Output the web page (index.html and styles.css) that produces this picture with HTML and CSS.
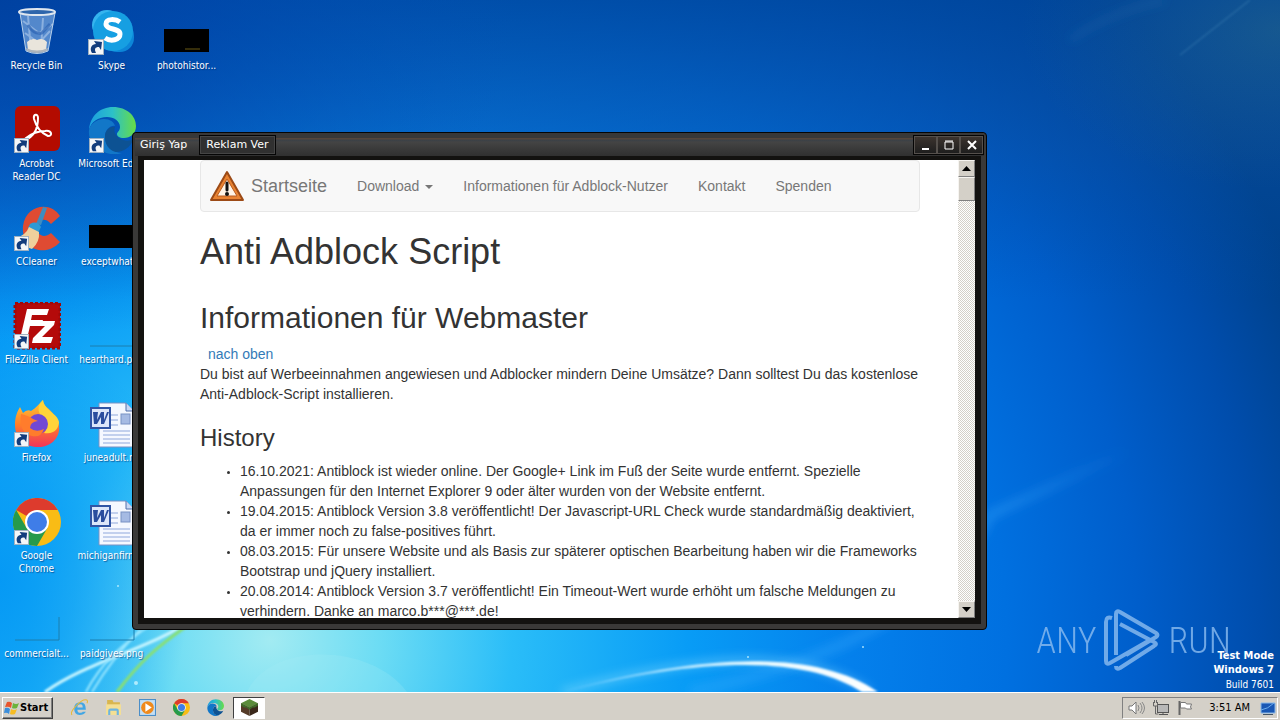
FILE: index.html
```html
<!DOCTYPE html>
<html lang="de">
<head>
<meta charset="utf-8">
<title>Desktop</title>
<link rel="stylesheet" href="styles.css">
</head>
<body>
<svg class="defs" aria-hidden="true">
  <symbol id="shortcut" viewBox="0 0 16 16">
    <rect x=".5" y=".5" width="15" height="15" fill="#f4f6f8" stroke="#9fb0c0"/>
    <path d="M4 14C1 9 4 5 8 5L6 2l8 1-1 8-2-3c-4 0-5 2-3 6z" fill="#123c7c"/>
  </symbol>
  <symbol id="skype" viewBox="0 0 48 48">
    <rect x="4" y="2" width="30" height="30" rx="15" fill="#35b4ee"/>
    <rect x="15" y="14" width="31" height="30" rx="14" fill="#0c86d8"/>
    <circle cx="25" cy="23" r="20" fill="#169fe2"/>
    <path d="M32 14c-4-3-14-4-14 2s14 4 14 10-9 8-15 4" fill="none" stroke="#fff" stroke-width="5"/>
  </symbol>
  <symbol id="edge" viewBox="0 0 48 48">
    <path d="M1 24C2 10 12 1 25 1c14 0 23 9 23 19 0 8-6 12-12 12-5 0-7-2-7-4s3-3 3-7c0-6-6-10-13-10C10 11 3 16 1 24z" fill="url(#edgeTop)"/>
    <path d="M1 24c2-7 8-11 15-11 6 0 10 3 11 7-4-1-10 3-10 11 0 9 8 16 17 16-5 2-13 2-20-2C5 41 0 33 1 24z" fill="#1277c8"/>
    <path d="M17 29c1-6 6-9 10-8-1 2-1 5 1 8 4 6 12 7 18 4-4 8-10 13-18 13-7-1-12-9-11-17z" fill="#0d5293"/>
  </symbol>
  <symbol id="chrome" viewBox="0 0 48 48">
    <circle cx="24" cy="24" r="24" fill="#f9bc15"/>
    <path d="M24 24 3.2 12A24 24 0 0 1 44.8 12H24z" fill="#dd3b2d"/>
    <path d="M3.2 12A24 24 0 0 0 24 48L34.4 30 24 24 13.6 30z" fill="#269a4b"/>
    <circle cx="24" cy="24" r="12" fill="#fff"/><circle cx="24" cy="24" r="10" fill="#3f7de8"/>
  </symbol>
  <symbol id="word" viewBox="0 0 48 48">
    <path d="M11 3h27l8 8v36H11z" fill="#f5f8ff" stroke="#7891c4"/>
    <path d="M38 3v8h8" fill="#c8d8f4" stroke="#506ea9"/>
    <path d="M22 15h8M22 20h8M22 25h8M15 31h27M15 35h27M15 39h27M15 43h27" stroke="#8fa8dc"/>
    <rect x="33" y="14" width="9" height="10" fill="#a5bae3" stroke="#7891c4"/>
    <rect x="3" y="8" width="19" height="20" fill="#dce6fa" stroke="#3155a5" stroke-width="2"/>
    <path d="M5 12h5l-1 8 4-8h3v8l3-8h2l-5 12h-3v-7l-4 7H6z" fill="#2a4d9e"/>
  </symbol>
  <linearGradient id="edgeTop"><stop offset="0" stop-color="#1b9de0"/><stop offset=".5" stop-color="#2cc0c8"/><stop offset="1" stop-color="#68dd45"/></linearGradient>
  <linearGradient id="fox" x2="0" y2="1"><stop stop-color="#ffcb36"/><stop offset=".5" stop-color="#ff8129"/><stop offset="1" stop-color="#f0345a"/></linearGradient>
</svg>

<main class="desktop">
  <svg class="wallpaper" viewBox="0 0 1280 692" preserveAspectRatio="none" aria-hidden="true">
    <defs>
      <radialGradient id="sky" gradientUnits="userSpaceOnUse" cx="0" cy="0" r="1100" gradientTransform="translate(270 640) scale(1 .92)">
        <stop offset="0" stop-color="#a2ebf2"/><stop offset=".1" stop-color="#6cdcf4"/><stop offset=".22" stop-color="#2abdf8"/><stop offset=".38" stop-color="#089cf6"/><stop offset=".53" stop-color="#0480ec"/><stop offset=".67" stop-color="#0070e0"/><stop offset=".79" stop-color="#005ecb"/><stop offset=".9" stop-color="#004dac"/><stop offset="1" stop-color="#004088"/>
      </radialGradient>
      <radialGradient id="corner" gradientUnits="userSpaceOnUse" cx="0" cy="0" r="1" gradientTransform="scale(520 340)">
        <stop offset="0" stop-color="#0040a0" stop-opacity=".9"/><stop offset=".4" stop-color="#0044aa" stop-opacity=".6"/><stop offset="1" stop-color="#0050b8" stop-opacity="0"/>
      </radialGradient>
      <radialGradient id="left"><stop offset="0" stop-color="#0094f4" stop-opacity=".85"/><stop offset=".4" stop-color="#0094f4" stop-opacity=".6"/><stop offset="1" stop-color="#0094f4" stop-opacity="0"/></radialGradient>
      <linearGradient id="top" x2="0" y2="1"><stop offset="0" stop-color="#00469c" stop-opacity=".8"/><stop offset=".5" stop-color="#084fa4" stop-opacity=".45"/><stop offset="1" stop-color="#0050b0" stop-opacity="0"/></linearGradient>
      <radialGradient id="haze"><stop offset="0" stop-color="#68a070" stop-opacity=".2"/><stop offset="1" stop-color="#407a90" stop-opacity="0"/></radialGradient>
      <linearGradient id="arc"><stop offset="0" stop-color="#5cc4ff"/><stop offset=".6" stop-color="#e8faff"/><stop offset="1" stop-color="#fff"/></linearGradient>
      <linearGradient id="ray" gradientUnits="userSpaceOnUse" x1="690" y1="692" x2="1130" y2="450"><stop offset="0" stop-color="#45b0ff" stop-opacity=".3"/><stop offset=".7" stop-color="#45b0ff" stop-opacity=".3"/><stop offset="1" stop-color="#45b0ff" stop-opacity="0"/></linearGradient>
      <filter id="soft"><feGaussianBlur stdDeviation="1"/></filter>
      <filter id="glow" x="-20%" y="-50%" width="140%" height="200%"><feGaussianBlur stdDeviation="5"/></filter>
    </defs>
    <rect width="1280" height="692" fill="url(#sky)"/>
    <ellipse cx="0" cy="580" rx="190" ry="260" fill="url(#left)"/>
    <rect width="1280" height="300" fill="url(#top)"/>
    <rect width="540" height="340" fill="url(#corner)"/>
    <ellipse cx="1280" cy="30" rx="260" ry="160" fill="url(#haze)"/>
    <path d="M1180 55 1250 0" stroke="#5c9cc8" stroke-opacity=".5" filter="url(#soft)"/>
    <path d="M1070 40Q1110 12 1165 0" fill="none" stroke="#3978b8" stroke-opacity=".2" stroke-width="6" filter="url(#glow)"/>
    <path d="M690 692Q800 670 880 625T990 515L1130 450" fill="none" stroke="url(#ray)" stroke-width="10" filter="url(#glow)"/>
    <path d="M247 692C270 642 370 642 407 692z" fill="#a8ecf8" fill-opacity=".22"/>
    <path d="M562 692C690 656 800 644 870 692" fill="none" stroke="#9ae4ff" stroke-width="7" stroke-opacity=".4" filter="url(#glow)"/>
    <path d="M562 692C690 660 800 652 862 692H878C812 646 690 656 562 692z" fill="url(#arc)" filter="url(#soft)"/>
    <path d="M45 692C90 660 150 650 200 615" fill="none" stroke="#c9f6ff" stroke-width="3" filter="url(#soft)"/>
    <path d="M86 692C100 665 120 645 155 622M92 692C110 662 125 645 140 630" fill="none" stroke="#9be8ff" stroke-width="2" filter="url(#soft)"/>
    <path d="M117 692C138 664 155 647 200 617" fill="none" stroke="#8ae070" stroke-width="3" filter="url(#soft)"/>
    <g fill="#c8f4ff" opacity=".8"><circle cx="748" cy="657" r="1"/><circle cx="863" cy="647" r="1"/><circle cx="118" cy="586" r="1"/><circle cx="136" cy="683" r="2"/></g>
  </svg>

  <div class="icons">
    <div class="icon"><svg viewBox="0 0 48 48"><path d="M7 5 13 43q11 5 22 0L42 5z" fill="#8bb5e6" fill-opacity=".6" stroke="#b9d1ea"/><path d="m15 8 3 34m12-32-2 30M10 13l16 12 14-9M12 25l14 10 11-12" fill="none" stroke="#e0eefc" stroke-opacity=".4" stroke-width="2"/><path d="M15 17q6 10 14 8l8-9" fill="none" stroke="#2c64b4" stroke-opacity=".7" stroke-width="3"/><path d="M14 34q5-5 10-2 6-3 10 2l-1 8q-9 4-18 0z" fill="#e9e5dc"/><path d="M13 40q11 5 22 0l-1 3q-10 4-20 0z" fill="#adb4bb"/><ellipse cx="24" cy="4" rx="18" ry="3" fill="#2e66ac" stroke="#dfe7ef" stroke-width="2"/></svg><span>Recycle Bin</span></div>
    <div class="icon"><svg viewBox="0 0 48 48"><rect x="2" y="0" width="45" height="45" rx="6" fill="#b30b00"/><path d="M12 34c8-3 13-10 13-22 0-5-5-4-4 1 2 7 7 14 14 17 5 0 4-6-3-5-8 0-14 3-19 7-4 4-4 5-1 2z" fill="none" stroke="#fff" stroke-width="2"/><use href="#shortcut" x="1" y="32" width="15" height="15"/></svg><span>Acrobat<br>Reader DC</span></div>
    <div class="icon"><svg viewBox="0 0 48 48"><path d="M47 12C38-3 13 0 10 22c-2 24 23 32 37 16l-9-9c-7 6-15 2-14-6s9-10 14-3z" fill="#df4b32"/><path d="m30 3 4 1-6 17-5-1z" fill="#3e8dc0"/><path d="M17 20q7-4 11 3l-3 6-10-5z" fill="#2d9bd6"/><path d="M3 34q10-3 13-11l10 5q1 10-7 17Q8 42 3 34z" fill="#efd09c"/><use href="#shortcut" x="1" y="32" width="15" height="15"/></svg><span>CCleaner</span></div>
    <div class="icon"><svg viewBox="0 0 48 48"><rect x="2" y="1" width="45" height="45" fill="#b40a0a" stroke="#a00808" stroke-width="3" stroke-dasharray="3 2"/><path d="M14 7h22l-2 6H19l-1 5h12l-2 6H17l-3 13H7zM25 19h17l-1 4-12 12h11l-2 6H19l1-5 12-12h-8z" fill="#fff"/><use href="#shortcut" x="1" y="32" width="15" height="15"/></svg><span>FileZilla Client</span></div>
    <div class="icon"><svg viewBox="0 0 48 48"><path d="M2 25C2 17 4 12 7 7l3 6q4-4 8-2C23 8 27 3 30 0c0 7 6 7 12 16 10 14 1 31-17 31C11 47 2 38 2 25z" fill="url(#fox)"/><path d="M30 0c-7 7-5 14 1 18 5 5 3 12 0 15 10 2 15-5 15-11C45 14 31 10 30 0z" fill="#ffd43a"/><circle cx="25" cy="24" r="10" fill="#7148d4"/><path d="M8 14q8 2 12 5l5 2q-8 1-8 7 6 5 14 1-3 9-12 7C10 34 6 26 8 14z" fill="#ff7c2c"/><use href="#shortcut" x="1" y="32" width="15" height="15"/></svg><span>Firefox</span></div>
    <div class="icon"><svg viewBox="0 0 48 48"><use href="#chrome" width="48" height="48"/><use href="#shortcut" x="1" y="32" width="15" height="15"/></svg><span>Google<br>Chrome</span></div>
    <div class="icon"><svg viewBox="0 0 48 48"><path d="M2 44h44V21" fill="none" stroke="#1c7fae"/></svg><span>commercialt...</span></div>
    <div class="icon"><svg viewBox="0 0 48 48"><use href="#skype" width="48" height="48"/><use href="#shortcut" x="0" y="31" width="16" height="16"/></svg><span>Skype</span></div>
    <div class="icon"><svg viewBox="0 0 48 48"><use href="#edge" width="48" height="48"/><use href="#shortcut" x="1" y="32" width="15" height="15"/></svg><span>Microsoft Edge</span></div>
    <div class="icon"><svg viewBox="0 0 48 48"><path d="M1 21h46v23H1z"/></svg><span>exceptwhat...</span></div>
    <div class="icon"><svg viewBox="0 0 48 48"><path d="M2 44h44V21" fill="none" stroke="#1c7fae"/></svg><span>hearthard.png</span></div>
    <div class="icon"><svg viewBox="0 0 48 48"><use href="#word" width="48" height="48"/></svg><span>juneadult.rtf</span></div>
    <div class="icon"><svg viewBox="0 0 48 48"><use href="#word" width="48" height="48"/></svg><span>michiganfirm...</span></div>
    <div class="icon"><svg viewBox="0 0 48 48"><path d="M2 44h44V21" fill="none" stroke="#1c7fae"/></svg><span>paidgives.png</span></div>
    <div class="icon"><svg viewBox="0 0 48 48"><path d="M1 21h45v23H1z"/><path d="M22 41h15" stroke="#6b5a14"/></svg><span>photohistor...</span></div>
  </div>

  <div class="brand">
    <span>ANY</span>
    <svg viewBox="0 0 56 64" aria-hidden="true"><path d="M12 46V5q0-4 4-2l36 21q3 2 0 4L22 46M8 9Q2 7 2 13v39q0 4 4 2l40-23M16 15l34 18q4 2 0 4L16 59q-4 2-4-2M12 15v30" fill="none" stroke="currentColor" stroke-width="4" stroke-linejoin="round"/></svg>
    <span>RUN</span>
  </div>
  <div class="build"><b>Test Mode</b><b>Windows 7</b><span>Build 7601</span></div>

  <section class="window">
    <header class="titlebar">
      <button class="menu">Giriş Yap</button>
      <button class="menu framed">Reklam Ver</button>
      <div class="controls">
        <button aria-label="Minimize"><svg viewBox="0 0 12 12"><path d="M2 10h7" stroke="#fff" stroke-width="2"/></svg></button>
        <button aria-label="Maximize"><svg viewBox="0 0 12 12"><path d="M2 3h8v7H2zM2 2h8" fill="none" stroke="#fff"/></svg></button>
        <button aria-label="Close"><svg viewBox="0 0 12 12"><path d="m2 2 8 8m0-8-8 8" stroke="#fff" stroke-width="2"/></svg></button>
      </div>
    </header>
    <div class="view">
      <article class="page">
        <nav class="navbar">
          <a class="home" href="#"><svg viewBox="0 0 36 32" aria-hidden="true"><path d="M18 2 34 30H2z" fill="#e98332" stroke="#9c4a16" stroke-width="2" stroke-linejoin="round"/><path d="M18 9 28 26H8z" fill="#fff4e6" stroke="#b85c20"/><path d="M18 13v7" stroke="#111" stroke-width="3" stroke-linecap="round"/><circle cx="18" cy="24" r="2" fill="#111"/></svg>Startseite</a>
          <a href="#">Download<i class="caret"></i></a>
          <a href="#">Informationen für Adblock-Nutzer</a>
          <a href="#">Kontakt</a>
          <a href="#">Spenden</a>
        </nav>
        <h1>Anti Adblock Script</h1>
        <h2>Informationen für Webmaster</h2>
        <a class="up" href="#">nach oben</a>
        <p>Du bist auf Werbeeinnahmen angewiesen und Adblocker mindern Deine Umsätze? Dann solltest Du das kostenlose Anti-Adblock-Script installieren.</p>
        <h3>History</h3>
        <ul>
          <li>16.10.2021: Antiblock ist wieder online. Der Google+ Link im Fuß der Seite wurde entfernt. Spezielle Anpassungen für den Internet Explorer 9 oder älter wurden von der Website entfernt.</li>
          <li>19.04.2015: Antiblock Version 3.8 veröffentlicht! Der Javascript-URL Check wurde standardmäßig deaktiviert, da er immer noch zu false-positives führt.</li>
          <li>08.03.2015: Für unsere Website und als Basis zur späterer optischen Bearbeitung haben wir die Frameworks Bootstrap und jQuery installiert.</li>
          <li>20.08.2014: Antiblock Version 3.7 veröffentlicht! Ein Timeout-Wert wurde erhöht um falsche Meldungen zu verhindern. Danke an marco.b***@***.de!</li>
        </ul>
      </article>
      <div class="scrollbar">
        <button aria-label="Scroll up"><svg viewBox="0 0 9 5"><path d="M0 5h9L4.500 0z"/></svg></button>
        <div class="thumb"></div>
        <button class="down" aria-label="Scroll down"><svg viewBox="0 0 9 5"><path d="M0 0h9L4.500 5z"/></svg></button>
      </div>
    </div>
  </section>
</main>

<footer class="taskbar">
  <button class="start"><svg viewBox="0 0 16 16" aria-hidden="true"><path d="M3 2q3-1 5 1L7 8Q5 6 1 7z" fill="#e8552c"/><path d="M9 3q3 2 6 0l-2 5q-3 1-5 0z" fill="#6cb33a"/><path d="M1 8q3-1 5 1l-1 5Q3 12 0 13z" fill="#3b8edb"/><path d="M7 9q3 2 6 0l-2 5q-3 1-5 0z" fill="#f7bd22"/></svg>Start</button>
  <button class="task" aria-label="Internet Explorer"><svg viewBox="0 0 16 16"><path d="M14 10H6q0 3 3 3 2 0 2-1h3q-2 3-6 3-5 0-5-6 0-6 6-6 5 0 5 7zM6 8h5q0-3-2-3-3 0-3 3z" fill="#42a6e4"/><path d="M1 15C-2 12 10-1 15 1q1 1 0 3" fill="none" stroke="#e6b93a"/></svg></button>
  <button class="task" aria-label="Explorer"><svg viewBox="0 0 16 16"><path d="M2 3V1h5l1 2h6v5H2z" fill="#d9b64e"/><path d="M1 5h14v10H1z" fill="#f5df93"/><path d="M3 15v-4q0-2 2-2h6q2 0 2 2v4h-2v-4H5v4z" fill="#6eb5e0"/></svg></button>
  <button class="task" aria-label="Media Player"><svg viewBox="0 0 16 16"><rect x=".5" y=".5" width="15" height="15" fill="#c4dff4" stroke="#4b8ec8"/><circle cx="8" cy="8" r="6" fill="#f08a1c"/><path d="m6 4 6 4-6 4z" fill="#fff"/></svg></button>
  <button class="task" aria-label="Chrome"><svg viewBox="0 0 16 16"><use href="#chrome" width="16" height="16"/></svg></button>
  <button class="task" aria-label="Edge"><svg viewBox="0 0 16 16"><use href="#edge" width="16" height="16"/></svg></button>
  <button class="task active" aria-label="Launcher"><svg viewBox="0 0 16 16"><path d="m8 0 8 4-8 4-8-4z" fill="#5b8c3a"/><path d="m0 4 8 4v8l-8-4z" fill="#553b28"/><path d="m16 4-8 4v8l8-4z" fill="#3b281b"/><path d="m0 4 8 4 8-4v2l-3 2-2 0-3 2-3-2-2 0-3-2z" fill="#3f6a28"/></svg></button>
  <div class="tray">
    <svg viewBox="0 0 18 16"><path d="M1 6h3l4-4v12l-4-4H1z" fill="#fff" stroke="#777"/><path d="M10 5q2 3 0 6m2-8q4 5 0 10m2-11q5 6 0 12" fill="none" stroke="#888"/></svg>
    <svg viewBox="0 0 18 16"><rect x="5.500" y="4.500" width="11" height="8" fill="#b8b8b8" stroke="#555"/><path d="M7 14.500h9M11 13v2" stroke="#555"/><path d="M1.500 2v4h4V2M2.500 0v3m2-3v3m-1 3v8h3" fill="none" stroke="#666"/></svg>
    <svg viewBox="0 0 18 16"><path d="M3.500 1v14" stroke="#666" stroke-width="2"/><path d="M4.500 2.500h5l1 1.500h5l-1 3 1 2h-5l-1-1h-5z" fill="#fff" stroke="#777"/></svg>
    <time>3:51 AM</time>
    <svg viewBox="0 0 18 16"><path d="M2 3h14v10H2z" fill="#1857b4" stroke="#88b8e8"/><path d="M2 10q7-1 13-7" stroke="#69aceb" fill="none"/><path d="M4 14.500h10" stroke="#456"/></svg>
  </div>
</footer>
</body>
</html>
```

FILE: styles.css
```css
* { box-sizing: border-box; }
body {
  margin: 0;
  height: 100vh;
  display: flex;
  flex-direction: column;
  overflow: hidden;
  font: 10px/13px "DejaVu Sans Condensed", "DejaVu Sans", sans-serif;
}
button { font: inherit; color: inherit; margin: 0; padding: 0; border: 0; background: none; }
.defs { position: absolute; width: 0; height: 0; }

.desktop { position: relative; flex: 1; min-height: 0; background: #0070e0; }
.wallpaper { position: absolute; inset: 0; width: 100%; height: 100%; }

.icons {
  position: relative;
  display: grid;
  grid-auto-flow: column;
  grid-template-rows: repeat(7, 98px);
  grid-auto-columns: 73px;
  column-gap: 2px;
  padding-top: 8px;
  height: 100%;
  color: #fff;
  text-shadow: 1px 1px 1px rgba(0, 40, 100, .6);
}
.icon { display: flex; flex-direction: column; align-items: center; gap: 3px; text-align: center; white-space: nowrap; }
.icon svg { width: 48px; height: 48px; flex: none; }

.brand {
  position: absolute;
  right: 49px;
  bottom: 19px;
  display: flex;
  align-items: center;
  gap: 8px;
  color: #8dbdf0;
  opacity: .8;
  font: 300 36px/64px "Roboto Condensed", Roboto, sans-serif;
}
.brand svg { width: 56px; height: 64px; }
.build {
  position: absolute;
  right: 6px;
  bottom: 0;
  display: flex;
  flex-direction: column;
  align-items: flex-end;
  color: #fff;
  line-height: 15px;
}
.build b { font-size: 11px; line-height: 14px; }

.window {
  position: absolute;
  left: 132px;
  right: 293px;
  top: 132px;
  bottom: 62px;
  display: flex;
  flex-direction: column;
  padding: 0 5px 5px;
  border: 1px solid #050505;
  border-radius: 4px;
  background: #3a3938;
}
.titlebar {
  flex: none;
  display: flex;
  align-items: center;
  height: 23px;
  margin: 0 -3px;
  padding-left: 4px;
  background: linear-gradient(#383838 5px, #54453b 5px, #54453b 6px, #3a4147 7px, #444 9px, #303030);
  color: #fff;
  font: 11px/18px "DejaVu Sans", sans-serif;
}
.menu { height: 20px; padding: 0 6px; border: 1px solid transparent; }
.menu:first-child { padding-left: 0; }
.menu.framed { margin-left: 5px; border-color: #050505; background: #303030; box-shadow: inset 0 0 0 1px #454545; }
.controls { display: flex; margin-left: auto; border: 1px solid #050505; }
.controls button { display: grid; place-items: center; width: 23px; height: 18px; background: linear-gradient(#3b332e, #1e1e1e); border: 1px solid #55504c; }
.controls svg { width: 12px; height: 12px; }

.view { flex: 1; min-height: 0; display: flex; border: solid #131210; border-width: 4px 6px 6px; }
.page {
  flex: 1;
  min-width: 0;
  overflow: hidden;
  padding: 0 38px 0 56px;
  background: #fff;
  color: #333;
  font: 14px/20px "Liberation Sans", Arial, sans-serif;
}
.navbar {
  display: flex;
  align-items: center;
  height: 52px;
  margin-bottom: 20px;
  padding-left: 8px;
  background: #f8f8f8;
  border: 1px solid #e7e7e7;
  border-radius: 4px;
}
.navbar a { padding: 0 15px; color: #777; text-decoration: none; white-space: nowrap; }
.navbar .home { display: flex; align-items: center; gap: 6px; padding-left: 0; font-size: 18px; }
.home svg { width: 36px; height: 32px; }
.caret { display: inline-block; margin-left: 6px; vertical-align: middle; border: 4px solid transparent; border-top-color: #777; border-bottom: 0; }
h1, h2, h3 { margin: 0; font-weight: 400; }
h1 { font-size: 36px; line-height: 40px; margin-bottom: 29px; }
h2 { font-size: 30px; line-height: 33px; margin-bottom: 10px; }
h3 { font-size: 24px; line-height: 26px; margin: 21px 0 10px; }
.up { display: block; padding-left: 8px; color: #337ab7; text-decoration: none; }
p { margin: 0; }
ul { margin: 0; padding-left: 40px; }
li::marker { font-size: 10px; }

.scrollbar {
  flex: none;
  display: flex;
  flex-direction: column;
  width: 17px;
  background: repeating-conic-gradient(#fff 0 25%, #d4d0c8 0 50%) 0 0 / 2px 2px;
}
.scrollbar button { display: grid; place-items: center; height: 17px; }
.scrollbar button, .thumb { background: #d4d0c8; border: 1px solid; border-color: #f6f4f0 #808080 #808080 #f6f4f0; }
.scrollbar svg { width: 9px; height: 5px; }
.thumb { height: 24px; }
.down { margin-top: auto; }

.taskbar {
  position: relative;
  flex: none;
  display: flex;
  align-items: center;
  height: 28px;
  padding: 2px 2px 0;
  background: #d4d0c8;
  border-top: 1px solid #fff;
}
.start {
  display: flex;
  align-items: center;
  height: 22px;
  padding: 0 4px 0 1px;
  margin-right: 9px;
  border: 1px solid;
  border-color: #fff #404040 #404040 #fff;
  box-shadow: inset -1px -1px #808080;
  font-size: 11px;
  font-weight: 700;
}
.start svg { width: 16px; height: 16px; }
.task { display: grid; place-items: center; width: 34px; height: 22px; }
.task svg { width: 17px; height: 17px; }
.task.active { width: 32px; margin-left: 1px; background: #fff; border: 1px solid; border-color: #404040 #fff #fff #404040; }
.tray {
  display: flex;
  align-items: center;
  gap: 6px;
  height: 22px;
  margin-left: auto;
  padding: 0 0 0 5px;
  border: 1px solid;
  border-color: #808080 #fff #fff #808080;
}
.tray svg { width: 18px; height: 16px; }
.tray time { margin: 0 3px 0 9px; font-size: 11px; }
```
